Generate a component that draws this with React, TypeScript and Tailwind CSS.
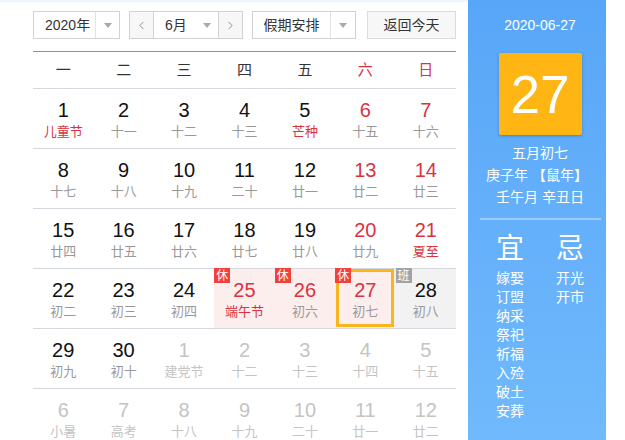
import { ChevronLeft, ChevronRight } from "lucide-react";

type Cell = {
  d: number;
  l: string;
  red?: boolean;
  lred?: boolean;
  out?: boolean;
  bg?: string;
  badge?: "休" | "班";
  today?: boolean;
};

const rows: Cell[][] = [
  [
    { d: 1, l: "儿童节", lred: true },
    { d: 2, l: "十一" },
    { d: 3, l: "十二" },
    { d: 4, l: "十三" },
    { d: 5, l: "芒种", lred: true },
    { d: 6, l: "十五", red: true },
    { d: 7, l: "十六", red: true },
  ],
  [
    { d: 8, l: "十七" },
    { d: 9, l: "十八" },
    { d: 10, l: "十九" },
    { d: 11, l: "二十" },
    { d: 12, l: "廿一" },
    { d: 13, l: "廿二", red: true },
    { d: 14, l: "廿三", red: true },
  ],
  [
    { d: 15, l: "廿四" },
    { d: 16, l: "廿五" },
    { d: 17, l: "廿六" },
    { d: 18, l: "廿七" },
    { d: 19, l: "廿八" },
    { d: 20, l: "廿九", red: true },
    { d: 21, l: "夏至", red: true, lred: true },
  ],
  [
    { d: 22, l: "初二" },
    { d: 23, l: "初三" },
    { d: 24, l: "初四" },
    { d: 25, l: "端午节", red: true, lred: true, bg: "bg-[#fdeeee]", badge: "休" },
    { d: 26, l: "初六", red: true, bg: "bg-[#fdeeee]", badge: "休" },
    { d: 27, l: "初七", red: true, bg: "bg-[#fdeeee]", badge: "休", today: true },
    { d: 28, l: "初八", bg: "bg-[#f2f2f2]", badge: "班" },
  ],
  [
    { d: 29, l: "初九" },
    { d: 30, l: "初十" },
    { d: 1, l: "建党节", out: true },
    { d: 2, l: "十二", out: true },
    { d: 3, l: "十三", out: true },
    { d: 4, l: "十四", out: true },
    { d: 5, l: "十五", out: true },
  ],
  [
    { d: 6, l: "小暑", out: true },
    { d: 7, l: "高考", out: true },
    { d: 8, l: "十八", out: true },
    { d: 9, l: "十九", out: true },
    { d: 10, l: "二十", out: true },
    { d: 11, l: "廿一", out: true },
    { d: 12, l: "廿二", out: true },
  ],
];

const weekdays = ["一", "二", "三", "四", "五", "六", "日"];
const yi = ["嫁娶", "订盟", "纳采", "祭祀", "祈福", "入殓", "破土", "安葬"];
const ji = ["开光", "开市"];

function Caret() {
  return (
    <span className="w-0 h-0 border-l-[4px] border-r-[4px] border-t-[5px] border-l-transparent border-r-transparent border-t-[#a8a8a8]" />
  );
}

function DayCell({ c }: { c: Cell }) {
  const num = c.out ? "text-[#c4c4c4]" : c.red ? "text-[#d9333f]" : "text-[#111]";
  const lunar = c.out ? "text-[#c4c4c4]" : c.lred ? "text-[#d9333f]" : "text-[#999]";
  return (
    <div className={`relative flex flex-col items-center pt-[10px] ${c.bg ?? ""}`}>
      {c.today && (
        <div className="absolute left-[1px] right-[2px] top-0 bottom-[1px] border-[3px] border-[#f8b51c]" />
      )}
      {c.badge && (
        <span
          className={`absolute left-0 top-[-1px] w-[16px] h-[15px] flex items-center justify-center text-[12px] leading-none text-white ${
            c.badge === "休" ? "bg-[#f2403a]" : "bg-[#a3a3a3]"
          }`}
        >
          {c.badge}
        </span>
      )}
      <span className={`h-[22px] leading-[22px] text-[20px] ${num}`}>{c.d}</span>
      <span className={`mt-[1px] leading-[20px] text-[13px] ${lunar}`}>{c.l}</span>
    </div>
  );
}

export default function App() {
  return (
    <div
      className="w-[625px] h-[440px] bg-white flex overflow-hidden"
      style={{ fontFamily: '"Liberation Sans", "Noto Sans CJK SC", sans-serif' }}
    >
      <div className="ml-[33px] w-[423px] shrink-0 flex flex-col">
        <div className="h-[2px] shrink-0 -ml-[33px] w-[468px] bg-[#eef5fd]" />
        <div className="mt-[9px] h-[28px] shrink-0 flex text-[14px] text-[#333]">
          <div className="w-[87px] flex border border-[#d2d2d2]">
            <span className="w-[61px] flex items-center pl-[11px]">2020年</span>
            <span className="flex-1 flex items-center justify-center border-l border-[#e2e2e2]">
              <Caret />
            </span>
          </div>
          <div className="ml-[9px] w-[114px] flex border border-[#d2d2d2]">
            <span className="w-[24px] flex items-center justify-center bg-[#f7f7f7] border-r border-[#d2d2d2]">
              <ChevronLeft size={13} strokeWidth={1.5} color="#777" />
            </span>
            <span className="flex-1 flex items-center pl-[11px]">
              <span>6月</span>
              <span className="ml-[16px] flex">
                <Caret />
              </span>
            </span>
            <span className="w-[24px] flex items-center justify-center bg-[#f7f7f7] border-l border-[#d2d2d2]">
              <ChevronRight size={13} strokeWidth={1.5} color="#777" />
            </span>
          </div>
          <div className="ml-[9px] w-[104px] flex border border-[#d2d2d2]">
            <span className="w-[77px] flex items-center justify-center">假期安排</span>
            <span className="flex-1 flex items-center justify-center border-l border-[#e2e2e2]">
              <Caret />
            </span>
          </div>
          <div className="ml-[11px] w-[89px] flex items-center justify-center border border-[#dcdcdc] bg-[#f7f7f7]">
            返回今天
          </div>
        </div>
        <div className="mt-[12px] h-px shrink-0 bg-[#5d9de4]" />
        <div className="h-[37px] shrink-0 grid grid-cols-7 border-b border-[#d3d8df] text-[15px]">
          {weekdays.map((w, i) => (
            <div
              key={w}
              className={`flex items-center justify-center ${i >= 5 ? "text-[#d9333f]" : "text-[#333]"}`}
            >
              {w}
            </div>
          ))}
        </div>
        {rows.map((r, i) => (
          <div key={i} className="h-[60px] shrink-0 grid grid-cols-7 border-b border-[#d3d8df]">
            {r.map((c, j) => (
              <DayCell key={j} c={c} />
            ))}
          </div>
        ))}
      </div>
      <div className="ml-[12px] w-[138px] shrink-0 h-full bg-gradient-to-b from-[#58a6f8] to-[#70b9fc] flex flex-col text-white">
        <div className="pl-[6px] flex flex-col items-center">
          <div className="mt-[15px] leading-[20px] text-[14px]">2020-06-27</div>
          <div className="mt-[18px] w-[83px] h-[82px] rounded-[2px] bg-[#ffb514] shadow-[0_1px_3px_rgba(0,0,0,0.25)] flex items-center justify-center text-[53px] leading-none">
            27
          </div>
          <div className="mt-[7px] leading-[22px] text-[14px] text-center">
            <div>五月初七</div>
            <div className="-ml-[6px]">庚子年 【鼠年】</div>
            <div>壬午月 辛丑日</div>
          </div>
        </div>
        <div className="mt-[10px] ml-[12px] mr-[5px] h-[2px] bg-[#9ccbf9]" />
        <div className="mt-[14px] pl-[28px] flex gap-[32px]">
          <div className="w-[28px] flex flex-col items-center">
            <div className="text-[28px] leading-[30px]">宜</div>
            <div className="mt-[5px] text-[14px] leading-[19px]">
              {yi.map((t) => (
                <div key={t}>{t}</div>
              ))}
            </div>
          </div>
          <div className="w-[28px] flex flex-col items-center">
            <div className="text-[28px] leading-[30px]">忌</div>
            <div className="mt-[5px] text-[14px] leading-[19px]">
              {ji.map((t) => (
                <div key={t}>{t}</div>
              ))}
            </div>
          </div>
        </div>
      </div>
    </div>
  );
}
